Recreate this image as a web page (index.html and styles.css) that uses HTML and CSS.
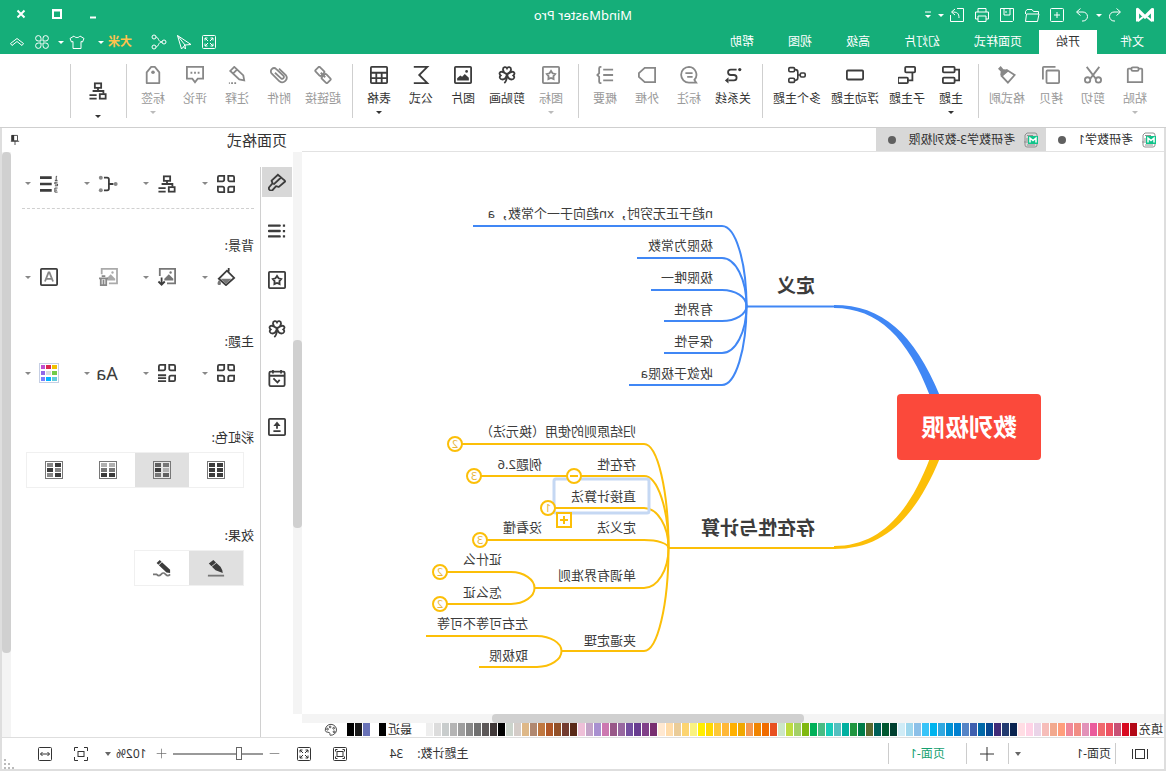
FILE: index.html
```html
<!DOCTYPE html>
<html lang="zh-CN">
<head>
<meta charset="utf-8">
<title>MindMaster Pro</title>
<link rel="stylesheet" href="styles.css">
</head>
<body>
<svg class="defs" aria-hidden="true">
  <defs>
    <symbol id="i-logo" viewBox="0 0 18 16"><path d="M1.500 14.500V2.500L9 10l7.500-7.500v12" fill="none" stroke="currentColor" stroke-width="3.200" stroke-linejoin="round"/><path d="M2 14l5-4M16 14l-5-4" stroke="currentColor" stroke-width="2"/></symbol>
    <symbol id="i-redo" viewBox="0 0 16 16"><path d="M9.500 1.500 13.500 5 9.500 8.500M13 5H7a4.500 4.500 0 0 0 0 9h1" /></symbol>
    <symbol id="i-undo" viewBox="0 0 16 16"><path d="M6.500 1.500 2.500 5l4 3.500M3 5h6a4.500 4.500 0 0 1 0 9H8"/></symbol>
    <symbol id="i-new" viewBox="0 0 16 16"><rect x="1.500" y="1.500" width="13" height="13" rx="1"/><path d="M8 5v6M5 8h6"/></symbol>
    <symbol id="i-open" viewBox="0 0 16 16"><path d="M1.500 7V4.500h5l1.500-2h5l1.500 2V7M1 7h12.500l1 7.500h-12z"/></symbol>
    <symbol id="i-save" viewBox="0 0 16 16"><path d="M1.500 1.500h13v13h-12l-1-1zM5 1.500V8h6V1.500M9 4v2"/></symbol>
    <symbol id="i-print" viewBox="0 0 16 16"><path d="M4 5V1.500h8V5M4 12H1.500V5h13v7H12M4 9h8v5.500H4z"/></symbol>
    <symbol id="i-export" viewBox="0 0 16 16"><path d="M8 1.500H1.500v13h13V8M6 11c0-5 2-6 7-6M10 2l3.500 3L10 8"/></symbol>
    <symbol id="i-more" viewBox="0 0 8 8"><path d="M1 1h6" stroke="currentColor"/><path d="M1 4h6L4 7z" fill="currentColor" stroke="none"/></symbol>
    <symbol id="i-full" viewBox="0 0 16 16"><rect x="1.500" y="1.500" width="13" height="13" rx="1"/><path d="M4 6.500V4h2.500M9.500 4H12v2.500M12 9.500V12H9.500M6.500 12H4V9.500M4 4l3 3M12 4 9 7M12 12 9 9M4 12l3-3"/></symbol>
    <symbol id="i-send" viewBox="0 0 16 16"><path d="M14.500 1.500 1 10.500 7 11l3.500 4zM7 11l-.5 4 2-2M14.500 1.500 7 11"/></symbol>
    <symbol id="i-share" viewBox="0 0 16 16"><circle cx="3" cy="8" r="2"/><circle cx="13" cy="3" r="2"/><circle cx="13" cy="13" r="2"/><path d="M5 8c4 0 3-4.500 6-5M5 8c4 0 3 4.500 6 5"/></symbol>
    <symbol id="i-shirt" viewBox="0 0 16 16"><path d="M5 2 1 4.500 2.500 8l1.500-.5v7h8v-7l1.500.5L15 4.500 11 2c-1 2-5 2-6 0z"/></symbol>
    <symbol id="i-quad" viewBox="0 0 16 16"><path d="M7 7H4.500A2.700 2.700 0 1 1 7 4.500zM9 7V4.500A2.700 2.700 0 1 1 11.500 7zM7 9v2.500A2.700 2.700 0 1 1 4.500 9zM9 9h2.500A2.700 2.700 0 1 1 9 11.500z"/></symbol>
    <symbol id="i-fold" viewBox="0 0 16 16"><path d="M1.500 9.500 8 4.500l6.500 5L13 11.500l-5-4-5 4z"/></symbol>

    <symbol id="i-paste" viewBox="0 0 20 20"><path d="M6 3H3a1 1 0 0 0-1 1v14h16V4a1 1 0 0 0-1-1h-3"/><rect x="6" y="1.500" width="8" height="4" rx="1.500"/></symbol>
    <symbol id="i-cut" viewBox="0 0 20 20"><path d="m3 1 10 13M17 1 7 14"/><circle cx="4" cy="15.500" r="3"/><circle cx="16" cy="15.500" r="3"/></symbol>
    <symbol id="i-copy" viewBox="0 0 20 20"><rect x="1" y="5" width="14" height="14" rx="1"/><path d="M5 1h13a1 1 0 0 1 1 1v13"/></symbol>
    <symbol id="i-brush" viewBox="0 0 20 20"><path d="M1.500 10 10 4.500l6 6.500-7 7.500z"/><path d="m10 4 4-.5L17 0l3 3-3 3 .500 4-2 2-7-6z" fill="currentColor" stroke="none"/></symbol>
    <symbol id="i-topic" viewBox="0 0 20 20"><rect x="6" y="1" width="13" height="6" rx="1"/><rect x="6" y="13" width="13" height="6" rx="1"/><path d="M6 4H1v12h5"/></symbol>
    <symbol id="i-sub" viewBox="0 0 20 20"><rect x="1" y="1" width="11" height="6" rx="1"/><rect x="9" y="13" width="11" height="6" rx="1"/><path d="M4 7v9h5"/></symbol>
    <symbol id="i-float" viewBox="0 0 20 20"><rect x="1" y="5" width="18" height="10" rx="1"/></symbol>
    <symbol id="i-multi" viewBox="0 0 22 20"><rect x="1" y="7.500" width="6" height="5" rx="1.500"/><rect x="14" y="1" width="7" height="5" rx="1.500"/><rect x="14" y="14" width="7" height="5" rx="1.500"/><path d="M7 10h3M14 3.500h-1a3 3 0 0 0-3 3v7a3 3 0 0 0 3 3h1"/></symbol>
    <symbol id="i-rel" viewBox="0 0 20 20"><circle cx="2.500" cy="4" r="1.800" fill="currentColor" stroke="none"/><path d="M6 4h6.500a3 3 0 0 1 0 6H9a3 3 0 0 0 0 6h6"/><path d="M15 12.500v7l4-3.500z" fill="currentColor" stroke="none"/></symbol>
    <symbol id="i-callout" viewBox="0 0 20 20"><path d="M10 1a8.500 8.500 0 1 1 0 17.500H2l2-3A8.700 8.700 0 0 1 10 1zM6 8h8M6 12h6"/></symbol>
    <symbol id="i-bound" viewBox="0 0 20 20"><path d="M1 2h11.500L19 8v4l-6.500 6H1z"/></symbol>
    <symbol id="i-sum" viewBox="0 0 20 20"><path d="M1 4h11M1 10h11M1 16h11M14 1h1a1.500 1.500 0 0 1 1.500 1.500V8l2 2-2 2v5.500A1.500 1.500 0 0 1 15 19h-1"/></symbol>
    <symbol id="i-star" viewBox="0 0 20 20"><rect x="1" y="1" width="18" height="18" rx="1"/><path d="m10 5.500 1.700 2.600 3 .8-2 2.400.2 3.200-2.900-1.200-2.900 1.200.2-3.200-2-2.400 3-.8z"/></symbol>
    <symbol id="i-clover" viewBox="0 0 20 20"><path d="M10 9C6 7 5.500 5 5.500 3.800 5.500 1 9 .5 10 2.500 11 .5 14.500 1 14.500 3.800 14.500 5 14 7 10 9zM10 9.500c-1 4-3 5.500-5 5.500-3 0-4-3-2-4.500C.5 8.500 2 6 4.500 6.500 6.500 7 8 8 10 9.500zM10 9.500c1 4 3 5.500 5 5.500 3 0 4-3 2-4.500 2.500-2 1-4.500-1.500-4C13.500 7 12 8 10 9.500zM10 10c0 4 .5 7 3 9"/></symbol>
    <symbol id="i-pic" viewBox="0 0 20 20"><rect x="1" y="1" width="18" height="18" rx="1"/><path d="m3.500 16 0-3 4.500-4 3 3 2-1.500 3.500 3V16z" fill="currentColor" stroke="none"/><circle cx="6" cy="6" r="1.500" fill="currentColor" stroke="none"/></symbol>
    <symbol id="i-sigma" viewBox="0 0 20 20"><path d="M18 1H3l9 9-9 9h15"/></symbol>
    <symbol id="i-table" viewBox="0 0 20 20"><rect x="1" y="1" width="18" height="18" rx="1"/><path d="M1 7.500h18M1 13.500h18M7 7.500V19M13 7.500V19"/></symbol>
    <symbol id="i-link" viewBox="0 0 20 20"><rect x="9" y="2.500" width="9" height="7" rx="1.500" transform="rotate(-45 13.500 6)"/><rect x="2" y="10.500" width="9" height="7" rx="1.500" transform="rotate(-45 6.500 14)"/><path d="m7.500 12.500 5-5"/></symbol>
    <symbol id="i-clip" viewBox="0 0 20 20"><path d="m14.500 7.500-7 6.500a2 2 0 0 1-2.500-3l8-7.500a3.500 3.500 0 0 1 5 5l-8.500 8.500a5 5 0 0 1-7-7L10 3" /></symbol>
    <symbol id="i-pencil" viewBox="0 0 20 20"><path d="m2 16 1-5.500L13 1l4.500 4.500-10 9.500zM10 4l4.500 4.500"/><path d="M11 19h8" stroke-dasharray="2 1.500"/></symbol>
    <symbol id="i-comment" viewBox="0 0 20 20"><path d="M1 1h18v13h-6l-3 4-3-4H1z"/><path d="M5 7.500h2M9 7.500h2M13 7.500h2"/></symbol>
    <symbol id="i-tag" viewBox="0 0 20 20"><path d="M3 19V7l5-6h4l5 6v12z" stroke-linejoin="round"/><circle cx="10" cy="7" r="2" fill="currentColor" stroke="none"/></symbol>
    <symbol id="i-org" viewBox="0 0 20 20"><rect x="6.500" y="1.500" width="7" height="5"/><path d="M10 6.500V10M4 13v-3h12M11 14.500h0M11.500 14.500h8M11.500 18.500h8"/><rect x="1.500" y="13.500" width="6.500" height="5"/></symbol>

    <symbol id="i-doc" viewBox="0 0 14 16"><path d="M13 9v4a2 2 0 0 1-2 2H3a2 2 0 0 1-2-2V3a2 2 0 0 1 2-2h8l2 2v8M5 3.500h6M3 13h8M11 6v5" stroke="#909090" fill="none"/><rect x="0" y="4" width="10" height="8" fill="#10c48a" stroke="none"/><path d="M2 10.500V6l3 2.500L8 6v4.500" stroke="#fff" stroke-width="1.500" fill="none"/></symbol>

    <symbol id="i-roller" viewBox="0 0 20 20"><path d="M9 2 3 7c-1 1-2 1-2 2.500l7 6c1 0 2-1 3-1l3.500 4a2 2 0 0 0 4-3L15 11.500c0-1.500 1-2 1-3zM5.500 5l8.500 8"/></symbol>
    <symbol id="i-list" viewBox="0 0 20 20"><path d="M7 4h12M7 10h12M7 16h12" stroke-width="2.600" stroke-linecap="round"/><path d="M1 4h2.500M1 10h2.500M1 16h2.500" stroke-width="2.500"/></symbol>
    <symbol id="i-cal" viewBox="0 0 20 20"><rect x="1.500" y="3" width="17" height="16" rx="1.500"/><path d="M1.500 7.500h17M5.500 1v4M14.500 1v4M7 12l2.500 3 4.500-4.500"/></symbol>
    <symbol id="i-up" viewBox="0 0 20 20"><rect x="1" y="1" width="18" height="18" rx="1"/><path d="M6 14.500h8M10 12V6"/><path d="m6 9 4-5 4 5z" fill="currentColor" stroke="none"/></symbol>
    <symbol id="i-petals" viewBox="0 0 20 20"><path d="M1 2.500A1.500 1.500 0 0 1 2.500 1h5v4.500A1.500 1.500 0 0 1 6 7H1zM12 1h5.500A1.500 1.500 0 0 1 19 2.500V7h-5a2 2 0 0 1-2-2zM1 13h4.500a2 2 0 0 1 2 2v4h-5A1.500 1.500 0 0 1 1 17.500zM14 13h5v4.500a1.500 1.500 0 0 1-1.500 1.500H12v-4a2 2 0 0 1 2-2z"/></symbol>
    <symbol id="i-petlist" viewBox="0 0 20 20"><path d="M1 2.500A1.500 1.500 0 0 1 2.500 1h5v4.500A1.500 1.500 0 0 1 6 7H1zM12 1h5.500A1.500 1.500 0 0 1 19 2.500V7h-5a2 2 0 0 1-2-2zM1 13h4.500a2 2 0 0 1 2 2v4h-5A1.500 1.500 0 0 1 1 17.500zM11 12.500h9M11 15.700h9M11 19h9"/></symbol>
    <symbol id="i-brace" viewBox="0 0 22 20"><circle cx="2.500" cy="10" r="2.200" fill="#888" stroke="none"/><circle cx="19" cy="3" r="2.200" fill="#888" stroke="none"/><circle cx="19" cy="17" r="2.200" fill="#888" stroke="none"/><path d="M5 10h5M15.500 3H12a2 2 0 0 0-2 2v10a2 2 0 0 0 2 2h3.500"/></symbol>
    <symbol id="i-num" viewBox="0 0 20 20"><path d="M7 3h13M7 10h13M7 17h13" stroke-width="3"/><path d="M1 1.500h1V6M.5 6h3M.5 8h3v2h-3v2h3M.5 14.500h3V19h-3M1 16.800h2" stroke-width="1"/></symbol>
    <symbol id="i-bucket" viewBox="0 0 20 20"><path d="M7 0v4M1 11l8-8 9 9-8 7z"/><path d="M4 12h12l-6 6z" fill="#777" stroke="none"/><path d="M17.500 13c3 4 2 6 0 6s-3-2 0-6z" fill="#777" stroke="none"/></symbol>
    <symbol id="i-picdown" viewBox="0 0 20 20"><path d="M10 17H1V1h17v8" stroke="#777"/><path d="M3 14v-2l5-5 5 5v2z" fill="#777" stroke="none"/><circle cx="6" cy="5" r="1.300" fill="#777" stroke="none"/><path d="M16 10.500V18M12.500 15l3.500 3.500 3.500-3.500"/></symbol>
    <symbol id="i-pictrash" viewBox="0 0 22 20"><path d="M10 17H1V1h17v6" stroke="#aaa"/><path d="M3 14v-2l5-5 4 4v3z" fill="#aaa" stroke="none"/><circle cx="6" cy="5" r="1.300" fill="#aaa" stroke="none"/><path d="M11 11.500h10M14 9h4M13 12v7h6v-7M16 13v5"/></symbol>
    <symbol id="i-abox" viewBox="0 0 20 20"><rect x="1" y="1" width="18" height="18" rx="1"/><path d="m5.500 15 4-10h1l4 10M7 12h6" stroke="#888"/></symbol>
    <symbol id="i-colors" viewBox="0 0 20 20"><rect x=".5" y=".5" width="19" height="19" stroke="#c5cfe4" stroke-width="1"/><g stroke="none"><path fill="#f0c000" d="M2 2h5v4H2z"/><path fill="#dc2850" d="M8 2h5v4H8z"/><path fill="#c050d0" d="M14 2h4v4h-4z"/><path fill="#70cc48" d="M2 8h5v4H2z"/><path fill="#ddd" d="M8 8h5v4H8z"/><path fill="#9068e8" d="M14 8h4v4h-4z"/><path fill="#60ccdc" d="M2 14h5v4H2z"/><path fill="#00b4ff" d="M8 14h5v4H8z"/><path fill="#7880ff" d="M14 14h4v4h-4z"/></g></symbol>
    <symbol id="i-pen" viewBox="0 0 20 20"><path d="m13 1 5 4-3 3-5-4zM9.500 4.500l5 4-4 4-8 3 .5-3 2-4z" fill="currentColor" stroke="none"/><path d="M1 18.500h18" stroke="#777"/></symbol>
    <symbol id="i-wave" viewBox="0 0 20 20"><path d="m12.500 1 3.500 3.500-2 2L10.500 3zM10 3.500l3.500 3.500L5 15l-4 .5L1 12z" fill="currentColor" stroke="none"/><path d="M1 17c2 2 3 2 5 0s3-2 5 0 3 2 5 0h4" stroke="#777"/></symbol>
    <symbol id="i-pin" viewBox="0 0 12 14"><path d="M3 1.500h7V8H3zM1 8.500h10M6 8.500V13" /><path d="M7 1h3v7H7z" fill="currentColor" stroke="none"/></symbol>
    <symbol id="i-wheel" viewBox="0 0 16 16"><path d="M8 1.500a6.500 6 0 1 0 1 12.500c1-.5-1-2 1-3s4 0 4.500-2.500A6.500 6.500 0 0 0 8 1.500z"/><circle cx="5" cy="6" r="1"/><circle cx="9" cy="4.500" r="1"/><circle cx="12" cy="7" r="1"/><circle cx="4.500" cy="10" r="1"/></symbol>
    <symbol id="i-slides" viewBox="0 0 18 14"><rect x="4.500" y="2.500" width="9" height="9"/><path d="M1.500 2v10M16.500 2v10"/></symbol>
    <symbol id="i-fit" viewBox="0 0 16 16"><rect x="1.500" y="1.500" width="13" height="13" rx="1"/><rect x="5" y="5.500" width="6" height="5"/><path d="M3.500 5.500v-2h2M10.500 3.500h2v2M12.500 10.500v2h-2M5.500 12.500h-2v-2"/></symbol>
    <symbol id="i-focus" viewBox="0 0 16 16"><rect x="5" y="5.500" width="6" height="5"/><path d="M1.500 5V1.500H5M11 1.500h3.500V5M14.500 11v3.500H11M5 14.500H1.500V11"/></symbol>
    <symbol id="i-width" viewBox="0 0 16 16"><rect x="1.500" y="1.500" width="13" height="13" rx="1"/><path d="M3.500 8h9M5.500 6l-2 2 2 2M10.500 6l2 2-2 2"/></symbol>
    <symbol id="i-plus" viewBox="0 0 16 16"><path d="M8 1v14M1 8h14"/></symbol>
    <symbol id="i-minus" viewBox="0 0 16 16"><path d="M1 8h14"/></symbol>
    <symbol id="t-a" viewBox="0 0 18 18"><rect x=".5" y=".5" width="17" height="17" fill="#fff" stroke="#777" stroke-width="1"/><path fill="#3c3c3c" stroke="none" d="M2 2h6v4H2zM10 2h6v4h-6zM2 7h6v4H2zM10 7h6v4h-6zM2 12h6v4H2zM10 12h6v4h-6z"/></symbol>
    <symbol id="t-b" viewBox="0 0 18 18"><rect x=".5" y=".5" width="17" height="17" fill="#e6e6e6" stroke="#777" stroke-width="1"/><g stroke="none"><path fill="#777" d="M2 2h6v4H2zM10 12h6v4h-6z"/><path fill="#606060" d="M10 2h6v4h-6zM2 12h6v4H2z"/><path fill="#b0b0b0" d="M2 7h6v4H2z"/><path fill="#3c3c3c" d="M10 7h6v4h-6z"/></g></symbol>
    <symbol id="t-c" viewBox="0 0 18 18"><rect x=".5" y=".5" width="17" height="17" fill="#fff" stroke="#777" stroke-width="1"/><g stroke="none"><path fill="#b0b0b0" d="M2 2h6v4H2zM10 2h6v4h-6z"/><path fill="#777" d="M2 7h6v4H2zM10 7h6v4h-6z"/><path fill="#3c3c3c" d="M2 12h6v4H2zM10 12h6v4h-6z"/></g></symbol>
    <symbol id="t-d" viewBox="0 0 18 18"><rect x=".5" y=".5" width="17" height="17" fill="#fff" stroke="#777" stroke-width="1"/><g stroke="none"><path fill="#3c3c3c" d="M2 2h6v4H2zM10 7h6v4h-6zM2 12h6v4H2z"/><path fill="#888" d="M10 2h6v4h-6zM2 7h6v4H2zM10 12h6v4h-6z"/></g></symbol>
  </defs>
</svg>

<div class="window">
  <header class="top">
    <div class="titlebar">
      <div class="quick">
        <span class="logo"><svg><use href="#i-logo"/></svg></span>
        <button class="q" aria-label="撤销"><svg><use href="#i-undo"/></svg></button>
        <i class="caret narrow"></i>
        <button class="q" aria-label="重做"><svg><use href="#i-redo"/></svg></button>
        <button class="q" aria-label="新建"><svg><use href="#i-new"/></svg></button>
        <button class="q" aria-label="打开"><svg><use href="#i-open"/></svg></button>
        <button class="q" aria-label="保存"><svg><use href="#i-save"/></svg></button>
        <button class="q" aria-label="打印"><svg><use href="#i-print"/></svg></button>
        <button class="q" aria-label="导出"><svg><use href="#i-export"/></svg></button>
        <i class="caret narrow"></i>
        <button class="q more" aria-label="更多"><svg><use href="#i-more"/></svg></button>
      </div>
      <h1 class="apptitle">MindMaster Pro</h1>
      <div class="winctl">
        <button aria-label="最小化"><svg viewBox="0 0 10 10"><path d="M2 8.500h6"/></svg></button>
        <button aria-label="最大化"><svg viewBox="0 0 10 10"><path d="M1 1h8v8H1zM1 1.500h8"/></svg></button>
        <button aria-label="关闭"><svg viewBox="0 0 10 10"><path d="m1.500 1.500 7 7M8.500 1.500l-7 7"/></svg></button>
      </div>
    </div>
    <nav class="menubar">
      <button class="menu file">文件</button>
      <button class="menu active">开始</button>
      <button class="menu">页面样式</button>
      <button class="menu">幻灯片</button>
      <button class="menu">高级</button>
      <button class="menu">视图</button>
      <button class="menu">帮助</button>
      <div class="account">
        <button class="q" aria-label="全屏"><svg><use href="#i-full"/></svg></button>
        <button class="q" aria-label="发送"><svg><use href="#i-send"/></svg></button>
        <button class="q" aria-label="分享"><svg><use href="#i-share"/></svg></button>
        <button class="user">大米</button>
        <i class="caret"></i>
        <button class="q" aria-label="皮肤"><svg><use href="#i-shirt"/></svg></button>
        <i class="caret narrow"></i>
        <button class="q" aria-label="应用"><svg><use href="#i-quad"/></svg></button>
        <button class="q" aria-label="收起"><svg><use href="#i-fold"/></svg></button>
      </div>
    </nav>
  </header>

  <div class="ribbon">
    <button class="tool off"><svg><use href="#i-paste"/></svg>粘贴<i class="caret"></i></button>
    <button class="tool off"><svg><use href="#i-cut"/></svg>剪切</button>
    <button class="tool off"><svg><use href="#i-copy"/></svg>拷贝</button>
    <button class="tool off"><svg><use href="#i-brush"/></svg>格式刷</button>
    <span class="sep"></span>
    <button class="tool"><svg><use href="#i-topic"/></svg>主题<i class="caret"></i></button>
    <button class="tool"><svg><use href="#i-sub"/></svg>子主题</button>
    <button class="tool"><svg><use href="#i-float"/></svg>浮动主题</button>
    <button class="tool"><svg><use href="#i-multi"/></svg>多个主题</button>
    <span class="sep"></span>
    <button class="tool"><svg><use href="#i-rel"/></svg>关系线</button>
    <button class="tool off"><svg><use href="#i-callout"/></svg>标注</button>
    <button class="tool off"><svg><use href="#i-bound"/></svg>外框</button>
    <button class="tool off"><svg><use href="#i-sum"/></svg>概要</button>
    <span class="sep"></span>
    <button class="tool off"><svg><use href="#i-star"/></svg>图标<i class="caret"></i></button>
    <button class="tool"><svg><use href="#i-clover"/></svg>剪贴画</button>
    <button class="tool"><svg><use href="#i-pic"/></svg>图片</button>
    <button class="tool"><svg><use href="#i-sigma"/></svg>公式</button>
    <button class="tool"><svg><use href="#i-table"/></svg>表格<i class="caret"></i></button>
    <span class="sep"></span>
    <button class="tool off"><svg><use href="#i-link"/></svg>超链接</button>
    <button class="tool off"><svg><use href="#i-clip"/></svg>附件</button>
    <button class="tool off"><svg><use href="#i-pencil"/></svg>注释</button>
    <button class="tool off"><svg><use href="#i-comment"/></svg>评论</button>
    <button class="tool off"><svg><use href="#i-tag"/></svg>标签<i class="caret"></i></button>
    <span class="sep"></span>
    <button class="tool solo" aria-label="布局"><svg><use href="#i-org"/></svg><i class="caret"></i></button>
    <span class="sep"></span>
  </div>

  <div class="work">
    <main class="editor">
      <div class="tabs">
        <button class="doc open"><svg><use href="#i-doc"/></svg><span>考研数学1</span><i class="dot"></i></button>
        <button class="doc"><svg><use href="#i-doc"/></svg><span>考研数学3-数列极限</span><i class="dot"></i></button>
      </div>
      <div class="stage">
        <svg class="map">
          <g transform="translate(-2 -152)">
            <g class="fillblue"><path d="M332 305C284 305 252 333 226 396H236C258 338 288 308 332 308z"/></g>
            <g class="fillgold"><path d="M332 549C284 549 252 521 226 458H236C258 516 288 546 332 546z"/></g>
            <g class="blue">
              <path d="M330 306.500H420"/>
              <path d="M419.500 306A24.500 80 0 0 1 444 226H693"/>
              <path d="M419.500 306A24.500 48 0 0 1 444 258H529"/>
              <path d="M419.500 306A24.500 16 0 0 1 444 290H515"/>
              <path d="M419.500 306A24.500 15 0 0 0 444 321H502"/>
              <path d="M419.500 306A24.500 47 0 0 0 444 353H502"/>
              <path d="M419.500 306A24.500 79 0 0 0 444 385H537"/>
            </g>
            <g class="gold">
              <path d="M330 548H498"/>
              <path d="M497.500 548A24.500 104 0 0 1 522 444H704"/>
              <path d="M497.500 548A24.500 72 0 0 1 522 476H685"/>
              <path d="M497.500 548A24.500 40 0 0 1 522 508H611"/>
              <path d="M497.500 548A24.500 8 0 0 1 522 540H679"/>
              <path d="M497.500 548A24.500 40 0 0 0 522 588H631.500"/>
              <path d="M497.500 548A24.500 103 0 0 0 522 651H604.500"/>
              <path d="M631.500 588A24 16 0 0 1 655 572H719"/>
              <path d="M631.500 588A24 16 0 0 0 655 604H719"/>
              <path d="M604.500 651A25 15 0 0 1 629 636H740"/>
              <path d="M604.500 651A25 16 0 0 0 629 667H687"/>
            </g>
            <rect class="selection" x="517" y="479" width="95" height="34" rx="2"/>
            <g class="gold badge">
              <circle cx="711" cy="444" r="7"/><circle cx="692" cy="476" r="7"/><circle cx="592" cy="476" r="7"/>
              <circle cx="618" cy="508" r="7"/><circle cx="686" cy="540" r="7"/><circle cx="726" cy="572" r="7"/><circle cx="726" cy="604" r="7"/>
              <path d="M588 476h8"/>
              <rect x="595" y="513" width="14" height="14"/><path d="M602 516v8M598 520h8"/>
            </g>
            <g class="count">
              <text x="711" y="448">2</text><text x="692" y="480">3</text><text x="618" y="512">1</text>
              <text x="686" y="544">3</text><text x="726" y="576">2</text><text x="726" y="608">2</text>
            </g>
            <rect class="root" x="125" y="394" width="144" height="66" rx="4"/>
            <text class="roottext" x="197" y="436">数列极限</text>
            <g class="branch"><text x="351" y="293">定义</text><text x="351" y="535">存在性与计算</text></g>
            <g class="leaf">
              <text x="453" y="218">n趋于正无穷时，xn趋向于一个常数，a</text>
              <text x="453" y="250">极限为常数</text>
              <text x="453" y="282">极限唯一</text>
              <text x="453" y="314">有界性</text>
              <text x="453" y="346">保号性</text>
              <text x="453" y="378">收敛于极限a</text>
              <text x="530" y="436">归结原则的使用（换元法）</text>
              <text x="530" y="469">存在性</text><text x="624" y="469">例题2.6</text>
              <text x="530" y="501">直接计算法</text>
              <text x="530" y="532">定义法</text><text x="624" y="532">没看懂</text>
              <text x="530" y="580">单调有界准则</text>
              <text x="664" y="564">证什么</text><text x="664" y="597">怎么证</text>
              <text x="530" y="645">夹逼定理</text>
              <text x="638" y="628">左右可等不可等</text><text x="638" y="660">取极限</text>
            </g>
          </g>
        </svg>
      </div>
      <div class="vscroll"><i></i></div>
      <div class="hscroll"><i></i></div>
      <div class="palette">
        <span class="plabel">填充</span>
        <div class="swatches" id="fill"></div>
        <span class="plabel recent">最近</span>
        <div class="swatches" id="recent"></div>
        <button class="wheel" aria-label="更多颜色"><svg><use href="#i-wheel"/></svg></button>
      </div>
    </main>

    <aside class="panel">
      <div class="phead"><h2>页面格式</h2><button aria-label="固定"><svg><use href="#i-pin"/></svg></button></div>
      <div class="side">
        <button class="on" aria-label="页面格式"><svg><use href="#i-roller"/></svg></button>
        <button aria-label="大纲"><svg><use href="#i-list"/></svg></button>
        <button aria-label="图标"><svg><use href="#i-star"/></svg></button>
        <button aria-label="剪贴画"><svg><use href="#i-clover"/></svg></button>
        <button aria-label="任务"><svg><use href="#i-cal"/></svg></button>
        <button aria-label="导出"><svg><use href="#i-up"/></svg></button>
      </div>
      <div class="pbody">
        <div class="row first">
          <button aria-label="布局"><svg><use href="#i-petals"/></svg><i class="caret"></i></button>
          <button aria-label="结构"><svg><use href="#i-org"/></svg><i class="caret"></i></button>
          <button aria-label="连线"><svg><use href="#i-brace"/></svg><i class="caret"></i></button>
          <button aria-label="编号"><svg><use href="#i-num"/></svg><i class="caret"></i></button>
        </div>
        <h3>背景:</h3>
        <div class="row">
          <button aria-label="背景颜色"><svg><use href="#i-bucket"/></svg><i class="caret"></i></button>
          <button aria-label="背景图片"><svg><use href="#i-picdown"/></svg><i class="caret"></i></button>
          <button class="dim" aria-label="删除背景"><svg><use href="#i-pictrash"/></svg></button>
          <button aria-label="水印"><svg><use href="#i-abox"/></svg><i class="caret"></i></button>
        </div>
        <h3>主题:</h3>
        <div class="row">
          <button aria-label="主题样式"><svg><use href="#i-petals"/></svg><i class="caret"></i></button>
          <button aria-label="主题列表"><svg><use href="#i-petlist"/></svg><i class="caret"></i></button>
          <button><span class="aa">Aa</span><i class="caret"></i></button>
          <button class="big" aria-label="主题颜色"><svg><use href="#i-colors"/></svg><i class="caret"></i></button>
        </div>
        <h3>彩虹色:</h3>
        <div class="seg">
          <button aria-label="彩虹色 1"><svg><use href="#t-a"/></svg></button>
          <button class="on" aria-label="彩虹色 2"><svg><use href="#t-b"/></svg></button>
          <button aria-label="彩虹色 3"><svg><use href="#t-c"/></svg></button>
          <button aria-label="彩虹色 4"><svg><use href="#t-d"/></svg></button>
        </div>
        <h3>效果:</h3>
        <div class="seg">
          <button class="on" aria-label="普通"><svg><use href="#i-pen"/></svg></button>
          <button aria-label="手绘"><svg><use href="#i-wave"/></svg></button>
        </div>
      </div>
      <div class="pscroll"><i></i></div>
    </aside>
  </div>

  <footer class="status">
    <button class="ic slides" aria-label="页面列表"><svg><use href="#i-slides"/></svg></button>
    <button class="pagepick">页面-1<i class="caret"></i></button>
    <button class="ic addpage" aria-label="新增页面"><svg><use href="#i-plus"/></svg></button>
    <button class="page">页面-1</button>
    <span class="topics">主题计数:<b>34</b></span>
    <button class="ic" aria-label="适应页面"><svg><use href="#i-fit"/></svg></button>
    <button class="ic" aria-label="全屏"><svg><use href="#i-full"/></svg></button>
    <button class="ic zoombtn" aria-label="缩小"><svg><use href="#i-minus"/></svg></button>
    <input class="zoom" type="range" min="0" max="100" value="24" aria-label="缩放">
    <button class="ic zoombtn" aria-label="放大"><svg><use href="#i-plus"/></svg></button>
    <button class="pct">102%<i class="caret"></i></button>
    <button class="ic" aria-label="居中"><svg><use href="#i-focus"/></svg></button>
    <button class="ic" aria-label="适应宽度"><svg><use href="#i-width"/></svg></button>
    <svg class="grip" viewBox="0 0 10 10"><path d="M8 0h2v2H8zM4 4h2v2H4zM8 4h2v2H8zM0 8h2v2H0zM4 8h2v2H4zM8 8h2v2H8z"/></svg>
  </footer>
</div>
<script src="app.js"></script>
</body>
</html>
```

FILE: styles.css
```css
* { box-sizing: border-box; }

body {
  margin: 0;
  font: 12px/16px "Noto Sans", "Noto Sans CJK SC", sans-serif;
  color: #333;
  overflow: hidden;
}

button {
  font: inherit;
  color: inherit;
  background: none;
  border: 0;
  padding: 0;
  white-space: nowrap;
}

svg {
  fill: none;
  stroke: currentColor;
  stroke-width: 2;
  flex: none;
}

h1, h2, h3 { margin: 0; font-weight: 400; }

.defs { display: none; }

/* The whole window is shown as its mirror image */
.window {
  height: 100vh;
  display: flex;
  flex-direction: column;
  background: #fff;
  transform: scaleX(-1);
}

.caret {
  width: 0;
  height: 0;
  border: 3px solid transparent;
  border-top-color: currentColor;
  border-bottom: 0;
}

/* Title and menus */
.top { background: #15ae79; color: #fff; }
.top svg { width: 16px; height: 16px; stroke-width: 1; }

.titlebar {
  height: 30px;
  display: grid;
  grid-template-columns: 1fr auto 1fr;
  align-items: center;
}

.quick, .winctl, .account { display: flex; align-items: center; }
.logo { width: 38px; display: flex; justify-content: center; padding-left: 4px; }
.top .logo svg { width: 18px; }
.q { width: 25px; height: 24px; display: flex; align-items: center; justify-content: center; }
.quick .narrow { margin: 0 1px; }
.account .narrow { margin: 0 3px 0 1px; }
.q.more { width: 18px; }
.top .more svg { width: 8px; height: 8px; }
.apptitle { font-size: 13px; line-height: 30px; }
.winctl { justify-content: flex-end; padding-right: 3px; }
.winctl button { width: 36px; height: 24px; padding-bottom: 4px; }
.top .winctl svg { width: 10px; height: 10px; stroke-width: 2; vertical-align: middle; }

.menubar { display: flex; height: 24px; }
.menu { padding: 0 17px; }
.menu.file { padding: 0 23px 0 22px; }
.menu.active { background: #fff; color: #333; }
.account { margin-left: auto; padding-right: 5px; }
.user { color: #ffc24d; font-weight: 700; margin: 0 4px 0 14px; }
.account .user + .caret { margin-right: 8px; }

/* Ribbon */
.ribbon {
  height: 74px;
  flex: none;
  display: flex;
  padding: 11px 0 0 10px;
  border-bottom: 1px solid #cfcfcf;
}

.tool {
  min-width: 42px;
  height: 52px;
  padding: 0 5px;
  display: flex;
  flex-direction: column;
  align-items: center;
  line-height: 16px;
}
.tool svg { width: 18px; height: 18px; margin: 1px 0 7px; color: #3c3c3c; }
.tool .caret { margin-top: 4px; color: #333; }
.tool.off { color: #999; }
.tool.off svg { color: #888; }
.tool.off .caret { color: #bbb; }
.tool.solo { min-width: 44px; padding-top: 16px; }
.tool.solo .caret { margin-top: 8px; }
.sep { width: 1px; height: 54px; margin: -1px 6px 0 5px; background: #cfcfcf; }

/* Work area */
.work { flex: 1; min-height: 0; display: flex; border-left: 2px solid #dedede; border-right: 2px solid #dedede; }

.editor {
  flex: 1;
  min-width: 0;
  display: grid;
  grid-template-columns: 1fr 9px;
  grid-template-rows: 24px 1fr 9px 14px;
}

.tabs { display: flex; border-bottom: 1px solid #e2e2e2; }
.doc { display: flex; align-items: center; padding: 0 12px 0 8px; background: #d8d8d8; }
.doc.open { background: #fff; }
.doc svg { width: 14px; height: 16px; stroke-width: 1; }
.doc span { margin: 0 12px 0 9px; }
.dot { width: 8px; height: 8px; border-radius: 50%; background: #606060; }

.stage { grid-column: 1; grid-row: 2; min-height: 0; overflow: hidden; }
.map { width: 100%; height: 100%; display: block; }
.map text { stroke: none; fill: #3c3c3c; }
.fillblue { fill: #4087f5; stroke: none; }
.fillgold { fill: #fcbf08; stroke: none; }
.blue { stroke: #4087f5; }
.gold { stroke: #fcbf08; }
.badge circle, .badge rect { fill: #fff; }
.selection { stroke: #c5d8f3; stroke-width: 3; }
.root { fill: #fb493b; stroke: none; }
.map .roottext { fill: #fff; font-size: 24px; font-weight: 700; text-anchor: middle; }
.branch { font-size: 19px; font-weight: 700; }
.leaf { font-size: 13px; }
.count { font-size: 11px; text-anchor: middle; }
.map .count text { fill: #e8b63c; }

.vscroll { grid-column: 2; grid-row: 2; background: #f4f4f4; }
.vscroll i { display: block; margin-top: 188px; height: 188px; border-radius: 4px; background: #d0d0d0; }
.hscroll { grid-column: 1; grid-row: 3; background: #f4f4f4; }
.hscroll i { display: block; margin-left: 360px; width: 312px; height: 9px; border-radius: 4px; background: #d0d0d0; }

.palette { grid-column: 1 / 3; grid-row: 4; display: flex; line-height: 14px; white-space: nowrap; }
.plabel { width: 27px; padding-left: 1px; }
.recent { margin-left: 13px; }
.swatches { display: flex; gap: 1px; }
.swatches i { width: 7px; height: 13px; }
.wheel { margin-left: 9px; }
.wheel svg { width: 14px; height: 14px; stroke-width: 1; display: block; color: #333; }

/* Format panel */
.panel {
  width: 291px;
  display: grid;
  grid-template-columns: 33px minmax(0, 1fr) 9px;
  grid-template-rows: 24px 1fr;
}
.phead { grid-column: 1 / 4; display: flex; justify-content: space-between; align-items: center; padding: 0 8px 0 6px; }
.phead h2 { font-size: 15px; }
.phead svg { width: 10px; height: 12px; stroke-width: 1; display: block; }

.side { display: flex; flex-direction: column; gap: 19px; margin-top: 15px; padding-left: 1px; border-right: 1px solid #d0d0d0; }
.side button { width: 30px; height: 30px; display: flex; align-items: center; justify-content: center; color: #3c3c3c; }
.side svg { width: 18px; height: 18px; }
.side .on { background: #d8d8d8; }

.pbody { padding: 15px 11px 0 6px; }
.row { display: grid; grid-template-columns: repeat(4, 59px); height: 34px; padding-left: 18px; }
.row button { display: flex; align-items: center; color: #3c3c3c; }
.row svg { width: 20px; height: 18px; }
.row .big svg { height: 20px; }
.row .caret { margin-left: 8px; color: #888; }
.row .dim { color: #888; }
.row.first { height: 42px; padding-bottom: 8px; border-bottom: 1px dashed #d0d0d0; }
.aa { font-size: 18px; line-height: 18px; width: 22px; }
.aa + .caret { margin-left: 6px; }
.pbody h3 { font-size: 13px; line-height: 18px; margin: 27px 0 6px; }
.row + h3 { margin-top: 38px; }
.row.first + h3 { margin-top: 27px; }
.seg { display: inline-flex; margin-left: 10px; border: 1px solid #f0f0f0; }
.seg button { width: 54px; height: 34px; display: flex; align-items: center; justify-content: center; color: #3c3c3c; }
.seg svg { width: 18px; height: 18px; }
.seg .on { background: #e0e0e0; }
.seg + h3 { margin-top: 38px; }

.pscroll { background: #f4f4f4; }
.pscroll i { display: block; height: 501px; border-radius: 4px; background: #d0d0d0; }

/* Status bar */
.status {
  height: 34px;
  flex: none;
  display: flex;
  align-items: center;
  border: 2px solid #dedede;
  border-top-width: 1px;
}
.status svg { width: 16px; height: 16px; stroke-width: 1; display: block; }
.ic { width: 36px; display: flex; justify-content: center; color: #333; }
.status .slides svg { width: 18px; height: 14px; }
.ic.slides { width: 49px; height: 21px; align-items: center; border-right: 1px solid #ccc; }
.pagepick { width: 107px; height: 21px; padding: 0 6px 0 4px; display: flex; align-items: center; justify-content: space-between; border-right: 1px solid #ccc; }
.status .caret { border-width: 4px 3px 0; color: #666; }
.ic.addpage { width: 42px; height: 21px; align-items: center; border-right: 1px solid #ccc; }
.page { height: 21px; width: 78px; color: #15a070; border-right: 1px solid #ccc; }
.topics { margin-left: auto; margin-right: 32px; }
.topics b { font-weight: 400; margin-left: 14px; }
.ic.zoombtn { width: 23px; color: #666; }
.status .zoombtn svg { width: 11px; height: 11px; }
.zoom { -webkit-appearance: none; appearance: none; width: 90px; height: 16px; margin: 0; background: none; }
.zoom::-webkit-slider-runnable-track { height: 2px; background: #999; }
.zoom::-webkit-slider-thumb { -webkit-appearance: none; width: 6px; height: 13px; margin-top: -6px; border: 1px solid #666; background: #fff; }
.pct { display: flex; align-items: center; gap: 5px; margin: 0 6px 0 3px; }
.status .grip { width: 10px; height: 10px; align-self: flex-end; margin-left: 13px; margin-right: 2px; fill: #bbb; stroke: none; }
```

FILE: app.js
```js
const fill = `b30816 d80a20 c85075 ee5262 f0696e ea5c9c e292b8 f18d84 f0889a ff9e7c f2a98e f6bdb9 ead4e8 ffd3e6 ffdde4
0a2350 223a70 3f2b78 084890 0068a8 3f5fae 5484c6 0080d0 0090d4 30a8e0 00b4ee 38c4f8 8cc0e8 a0d8ee d0ecf6
004030 005830 006058 5a6a30 007c48 209640 00b0a0 54c0c0 18ccb8 48bc84 00b058 80b810 a4d068 bedc40 cce6c8
e85020 f06c00 f08400 f49850 f0a800 ffb000 ffb838 fcc838 ffd800 ffee00 faf280 fcd470 eacc98 ffdcaa ffe8d0
782e70 804088 683c90 7450a0 9868a0 985888 cc78b0 a890d0 c4a4c8 eec0d8
5a2a18 743c30 925028 b05828 c07840 b08870 deb888 d4ccc8 ccd4cc
000000 403838 5c5858 707070 888888 9e9e9e b4b4b4 c8cccc dcdcdc eeeeee`;
const recent = "000000 ffffff 6a73b8 1a1a1a 000000";

function paint(id, list) {
  const box = document.getElementById(id);
  for (const color of list.split(/\s+/)) {
    const chip = document.createElement("i");
    chip.style.background = "#" + color;
    box.append(chip);
  }
}

paint("fill", fill);
paint("recent", recent);
```
